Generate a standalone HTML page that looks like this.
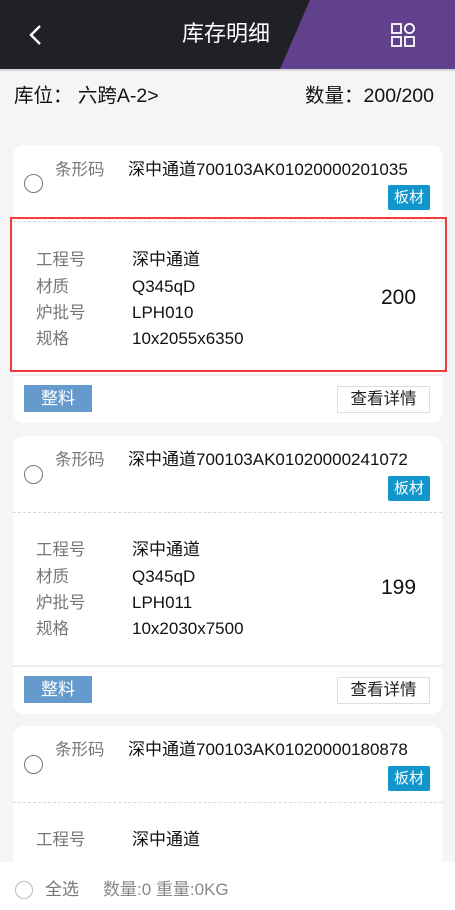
<!DOCTYPE html>
<html style="width:455px;height:910px;overflow:hidden"><head><meta charset="utf-8"><style>
*{margin:0;padding:0;box-sizing:border-box}
body{width:455px;height:910px;overflow:hidden;background:#f5f5f5;font-family:"Liberation Sans","Noto Sans CJK SC",sans-serif;position:relative;color:#111}
.hdr{position:absolute;left:0;top:0;width:455px;height:69px;background:#1f2127}
.abs{position:absolute;white-space:nowrap}
.card{position:absolute;left:13px;width:429px;height:278px;background:#fff;border-radius:11px;overflow:hidden}
.card .abs{line-height:20px}
.radio{position:absolute;left:11px;top:29px;width:19px;height:19px;border:1.5px solid #777;border-radius:50%}
.lbl{color:#777;font-size:16.5px}
.val{font-size:17px;color:#111}
.tag{position:absolute;left:375px;top:40px;width:42px;height:25px;background:#1296cc;color:#fff;font-size:15px;text-align:center;line-height:25px;border-radius:2px}
.dash{position:absolute;left:0;top:76px;width:429px;border-top:1px dashed #d8d8d8}
.line{position:absolute;left:0;top:229px;width:429px;border-top:2px solid #eee}
.b1{position:absolute;left:11px;top:240px;width:68px;height:27px;background:#6699cc;color:#fff;font-size:17px;text-align:center;line-height:27px}
.b2{position:absolute;left:324px;top:241px;width:93px;height:27px;border:1px solid #ddd;font-size:16.5px;text-align:center;line-height:25px;color:#222}
</style></head><body>
<div class="hdr"></div>
<svg class="abs" style="left:0;top:0" width="455" height="70"><polygon points="310,0 455,0 455,69 280,69" fill="#62418c"/>
<path d="M40 26 L31 35 L40 44" stroke="#fff" stroke-width="2.4" fill="none"/>
<rect x="392" y="24" width="9" height="9" stroke="#fff" stroke-width="1.8" fill="none"/>
<circle cx="409.5" cy="28.5" r="4.6" stroke="#fff" stroke-width="1.8" fill="none"/>
<rect x="392" y="37" width="9" height="9" stroke="#fff" stroke-width="1.8" fill="none"/>
<rect x="405" y="37" width="9" height="9" stroke="#fff" stroke-width="1.8" fill="none"/>
</svg>
<div class="abs" style="left:182px;top:21px;font-size:22px;color:#fff;line-height:26px">库存明细</div>
<div class="abs" style="left:0;top:69px;width:455px;height:2px;background:#d7d7d7"></div>
<div class="abs" style="left:14px;top:84px;font-size:19.5px;line-height:24px">库位：&nbsp;六跨A-2&gt;</div>
<div class="abs" style="left:305px;top:84px;font-size:19.5px;line-height:24px">数量：200/200</div>

<div class="card" style="top:145px">
<div class="radio"></div>
<div class="abs lbl" style="left:42px;top:15px">条形码</div>
<div class="abs val" style="left:115px;top:15px">深中通道700103AK01020000201035</div>
<div class="tag">板材</div><div class="dash"></div>
<div class="abs lbl" style="left:23px;top:105px">工程号</div><div class="abs val" style="left:119px;top:105px">深中通道</div>
<div class="abs lbl" style="left:23px;top:132px">材质</div><div class="abs val" style="left:119px;top:132px">Q345qD</div>
<div class="abs lbl" style="left:23px;top:158px">炉批号</div><div class="abs val" style="left:119px;top:158px">LPH010</div>
<div class="abs lbl" style="left:23px;top:184px">规格</div><div class="abs val" style="left:119px;top:184px">10x2055x6350</div>
<div class="abs" style="left:368px;top:143px;font-size:21px">200</div>
<div class="line"></div><div class="b1">整料</div><div class="b2">查看详情</div>
</div>
<div class="abs" style="left:10px;top:217px;width:437px;height:155px;border:2px solid #f03c3c"></div>

<div class="card" style="top:436px">
<div class="radio"></div>
<div class="abs lbl" style="left:42px;top:14px">条形码</div>
<div class="abs val" style="left:115px;top:14px">深中通道700103AK01020000241072</div>
<div class="tag">板材</div><div class="dash"></div>
<div class="abs lbl" style="left:23px;top:104px">工程号</div><div class="abs val" style="left:119px;top:104px">深中通道</div>
<div class="abs lbl" style="left:23px;top:131px">材质</div><div class="abs val" style="left:119px;top:131px">Q345qD</div>
<div class="abs lbl" style="left:23px;top:157px">炉批号</div><div class="abs val" style="left:119px;top:157px">LPH011</div>
<div class="abs lbl" style="left:23px;top:183px">规格</div><div class="abs val" style="left:119px;top:183px">10x2030x7500</div>
<div class="abs" style="left:368px;top:142px;font-size:21px">199</div>
<div class="line"></div><div class="b1">整料</div><div class="b2">查看详情</div>
</div>

<div class="card" style="top:726px;height:150px">
<div class="radio"></div>
<div class="abs lbl" style="left:42px;top:14px">条形码</div>
<div class="abs val" style="left:115px;top:14px">深中通道700103AK01020000180878</div>
<div class="tag">板材</div><div class="dash"></div>
<div class="abs lbl" style="left:23px;top:104px">工程号</div><div class="abs val" style="left:119px;top:104px">深中通道</div>
</div>

<div class="abs" style="left:0;top:862px;width:455px;height:48px;background:#fff"></div>
<div class="abs" style="left:15px;top:881px;width:18px;height:18px;border:1.5px solid #bbb;border-radius:50%"></div>
<div class="abs" style="left:45px;top:879px;font-size:17px;color:#777;line-height:22px">全选</div>
<div class="abs" style="left:103px;top:879px;font-size:17px;color:#888;line-height:22px">数量:0&nbsp;重量:0KG</div>
</body></html>
